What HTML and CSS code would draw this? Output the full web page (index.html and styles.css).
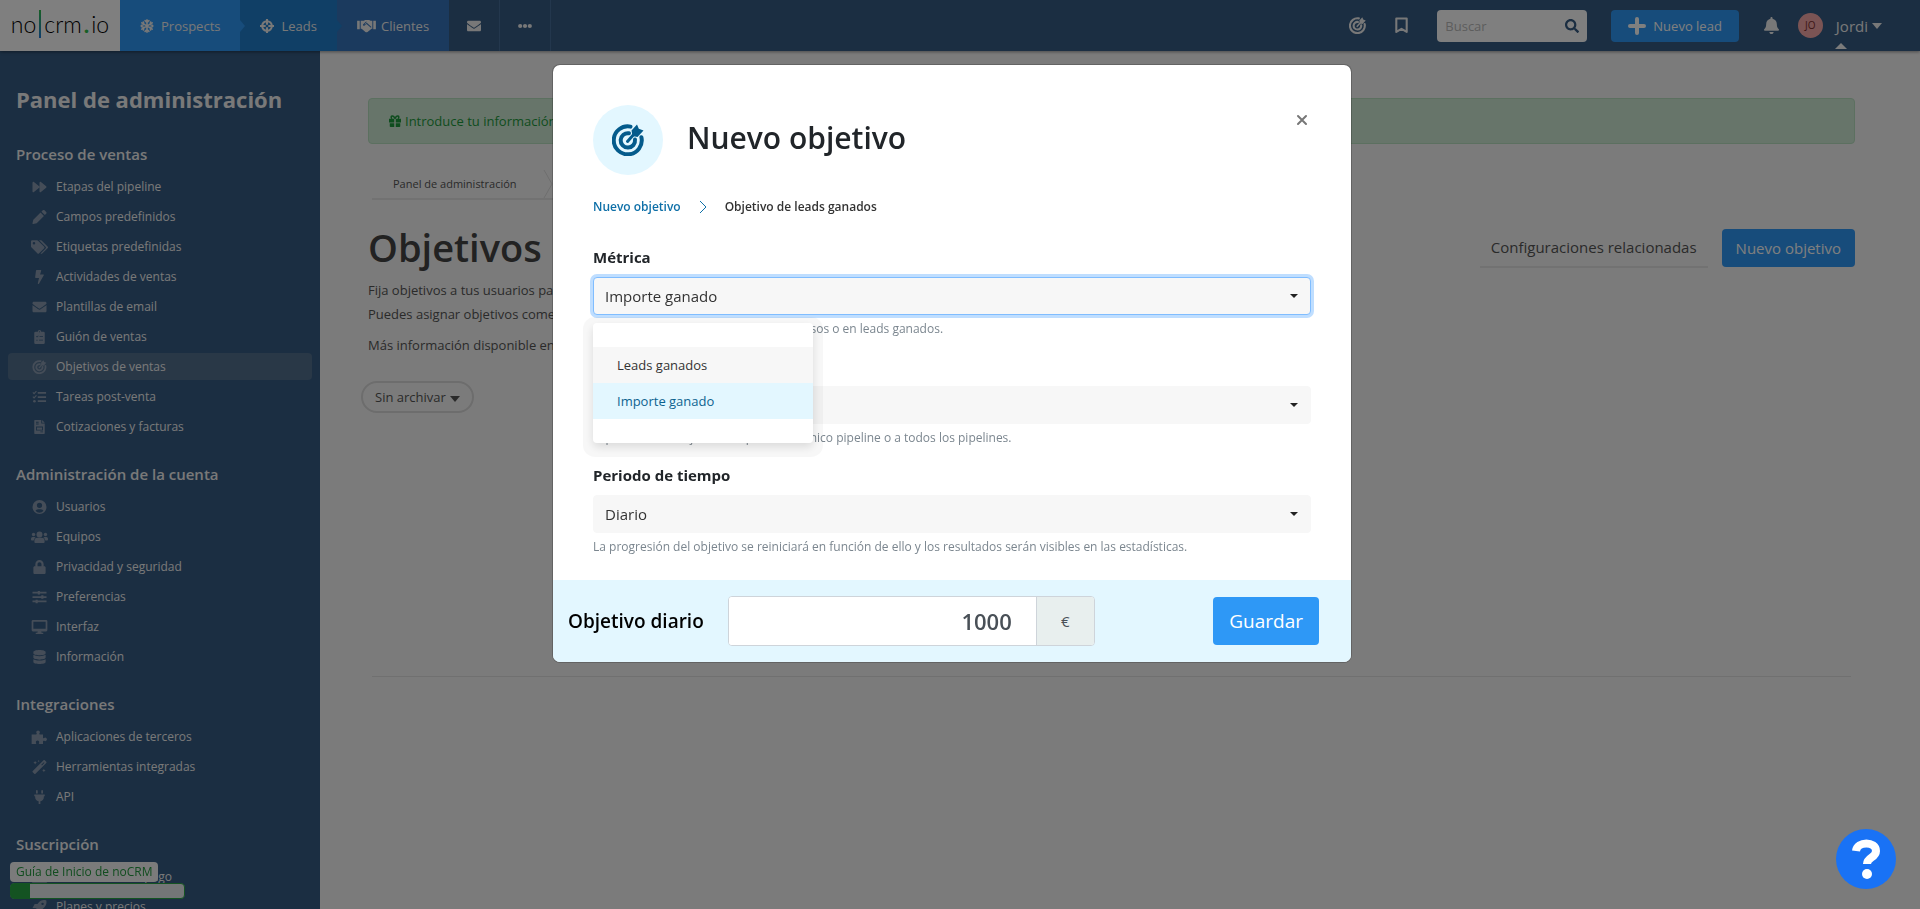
FILE: index.html
```html
<!doctype html>
<html lang="es">
  <head>
    <meta charset="UTF-8" />
    <meta name="viewport" content="width=device-width, initial-scale=1.0" />
    <title>Objetivos de ventas - noCRM.io</title>
    <link rel="stylesheet" href="styles.css">
  </head>
  <body>
    <!-- Icon sprite -->
    <svg class="sprite" aria-hidden="true">
      <symbol id="i-target" viewBox="0 0 32 32">
        <g fill="none" stroke="currentColor" stroke-linecap="round">
          <path stroke-width="4" d="M18.5 2.6A14 14 0 1 0 29.4 13.2" />
          <path stroke-width="4" d="M17 9.3A7.2 7.2 0 1 0 23 15.5" />
          <path stroke-width="3" d="M15.5 17.5L23 9" />
        </g>
        <path fill="currentColor" d="M19.5 6.5L25 .5l1.8 4.2L31.500 6.500l-6 6.500-5-1z" />
      </symbol>
      <symbol id="i-forward" viewBox="0 0 512 512">
        <path d="M500.500 231.400l-192-160C287.900 54.300 256 68.600 256 96v320c0 27.400 31.900 41.800 52.500 24.600l192-160c15.300-12.800 15.300-36.400 0-49.200zm-256 0l-192-160C31.900 54.300 0 68.600 0 96v320c0 27.400 31.900 41.800 52.500 24.600l192-160c15.300-12.800 15.300-36.400 0-49.200z" />
      </symbol>
      <symbol id="i-pencil" viewBox="0 0 16 16">
        <path d="M9.200 2.900l3.900 3.900-8.300 8.300L.8 16a.7.7 0 0 1-.8-.8l.9-4zM10.200 1.900l1.500-1.500a1.500 1.500 0 0 1 2.100 0l1.800 1.800a1.500 1.500 0 0 1 0 2.100l-1.500 1.500z" />
      </symbol>
      <symbol id="i-tags" viewBox="0 0 20 16">
        <path fill-rule="evenodd" d="M0 1.500V7.300c0 .4.200.8.400 1.100l7 7a1.500 1.500 0 0 0 2.200 0l5.700-5.700a1.500 1.500 0 0 0 0-2.200l-7-7A1.500 1.500 0 0 0 7.200 0H1.500A1.500 1.500 0 0 0 0 1.500zM3.500 2a1.500 1.500 0 1 1 0 3 1.500 1.500 0 0 1 0-3zM9.500 0l7.600 7.600a1.500 1.500 0 0 1 0 2.100l-5.900 5.900a1.500 1.500 0 0 0 2 0l6.300-6a1.500 1.500 0 0 0 0-2.200l-7-7A1.500 1.500 0 0 0 11.200 0z" />
      </symbol>
      <symbol id="i-bolt" viewBox="0 0 320 512">
        <path d="M296 160H180.600l42.600-129.800C227.200 15 215.700 0 200 0H56C44 0 33.800 8.900 32.200 20.800l-32 240C-1.700 275.200 9.500 288 24 288h118.700L96.600 482.500c-3.600 15.200 8 29.500 23.300 29.500 8.400 0 16.400-4.400 20.800-12l176-304c9.300-15.900-2.200-36-20.700-36z" />
      </symbol>
      <symbol id="i-envelope" viewBox="0 0 512 512">
        <path d="M502.300 190.800c3.900-3.100 9.700-.2 9.700 4.700V400c0 26.500-21.500 48-48 48H48c-26.500 0-48-21.500-48-48V195.600c0-5 5.700-7.800 9.700-4.700 22.400 17.400 52.100 39.500 154.100 113.600 21.100 15.400 56.700 47.800 92.200 47.600 35.700.3 72-32.800 92.300-47.600 102-74.100 131.600-96.300 154-113.700zM256 320c23.200.4 56.600-29.200 73.400-41.400 132.700-96.300 142.800-104.700 173.400-128.700 5.800-4.500 9.200-11.500 9.200-18.900v-19c0-26.500-21.500-48-48-48H48c-26.500 0-48 21.500-48 48v19c0 7.400 3.400 14.300 9.200 18.900 30.600 23.900 40.700 32.400 173.400 128.700 16.800 12.200 50.200 41.800 73.400 41.400z" />
      </symbol>
      <symbol id="i-clipboard" viewBox="0 0 12 16">
        <path fill-rule="evenodd" d="M1.500 2H4a2 2 0 0 1 4 0h2.500A1.500 1.500 0 0 1 12 3.500v11a1.500 1.500 0 0 1-1.500 1.500h-9A1.500 1.500 0 0 1 0 14.500v-11A1.500 1.500 0 0 1 1.500 2zM6 1.300a.7.7 0 1 0 0 1.400.7.7 0 0 0 0-1.400zM2 7.500l1.200 1.200L5 6.800l-.6-.6-1.200 1.300-.6-.6zM6 7h4v1H6zM2.500 11h1.200v1.200H2.500zM5.500 11H10v1H5.500z" />
      </symbol>
      <symbol id="i-tasks" viewBox="0 0 16 16">
        <path d="M6 2.200h9.500v2H6zM6 7h9.500v2H6zM6 11.800h9.500v2H6z" />
        <circle cx="2.200" cy="12.800" r="1.500" />
        <path fill="none" stroke="currentColor" stroke-width="1.300" d="M.4 2.800l1.400 1.400L4.500 1.400M.4 7.600L1.800 9l2.700-2.800" />
      </symbol>
      <symbol id="i-invoice" viewBox="0 0 12 16">
        <path fill-rule="evenodd" d="M.8 0H8v4h4v11.200a.8.8 0 0 1-.8.8H.8a.8.8 0 0 1-.8-.8V.8A.8.800 0 0 1 .8 0zM9 0l3 3H9zM2 2v1h3V2zM2 4v1h3V4zM2 7.500v4.500h8V7.500zM3 8.500h6V11H3zM7 13v1h3v-1z" />
      </symbol>
      <symbol id="i-user" viewBox="0 0 16 16">
        <path fill-rule="evenodd" d="M8 0a8 8 0 1 1 0 16A8 8 0 0 1 8 0zm0 3a3 3 0 1 0 0 6 3 3 0 0 0 0-6zM3.400 12.400a6 6 0 0 0 9.200 0A3.500 3.500 0 0 0 9.600 10.500H6.400a3.500 3.500 0 0 0-3 1.900z" />
      </symbol>
      <symbol id="i-users" viewBox="0 0 20 16">
        <circle cx="10" cy="5" r="3.500" /><circle cx="3" cy="5" r="2" /><circle cx="17" cy="5" r="2" />
        <path d="M4 14v-1.500A3.500 3.500 0 0 1 7.500 9h5a3.500 3.500 0 0 1 3.500 3.500V14a1 1 0 0 1-1 1H5a1 1 0 0 1-1-1zM0 11V10a2 2 0 0 1 2-2h2a2 2 0 0 1 1.400.6A4.500 4.500 0 0 0 3.200 12H1a1 1 0 0 1-1-1zM20 11V10a2 2 0 0 0-2-2h-2a2 2 0 0 0-1.400.6A4.500 4.500 0 0 1 16.800 12H19a1 1 0 0 0 1-1z" />
      </symbol>
      <symbol id="i-lock" viewBox="0 0 448 512">
        <path d="M400 224h-24v-72C376 68.200 307.800 0 224 0S72 68.200 72 152v72H48c-26.500 0-48 21.500-48 48v192c0 26.500 21.500 48 48 48h352c26.500 0 48-21.500 48-48V272c0-26.500-21.500-48-48-48zm-104 0H152v-72c0-39.700 32.300-72 72-72s72 32.300 72 72v72z" />
      </symbol>
      <symbol id="i-sliders" viewBox="0 0 16 16">
        <path d="M0 2h6V1h2.500v1H16v2H8.500v1H6V4H0zM0 7h10V6h2.500v1H16v2h-3.500v1H10V9H0zM0 12h3.500v-1H6v1h10v2H6v1H3.500v-1H0z" />
      </symbol>
      <symbol id="i-desktop" viewBox="0 0 18 16">
        <path fill-rule="evenodd" d="M1.500 0h15A1.500 1.500 0 0 1 18 1.500v10a1.500 1.500 0 0 1-1.500 1.500H11l.5 1.500h1.800V16H4.700v-1.500h1.800L7 13H1.500A1.500 1.500 0 0 1 0 11.500v-10A1.500 1.500 0 0 1 1.500 0zM2 2v8h14V2z" />
      </symbol>
      <symbol id="i-database" viewBox="0 0 14 16">
        <path d="M14 2.300v1.400C14 5 10.900 6 7 6S0 5 0 3.700V2.300C0 1 3.100 0 7 0s7 1 7 2.300zM14 5.500v3.200C14 10 10.900 11 7 11S0 10 0 8.700V5.500C1.500 6.500 4.300 7 7 7s5.500-.5 7-1.500zM14 10.500v3.200C14 15 10.900 16 7 16s-7-1-7-2.300v-3.200C1.500 11.500 4.300 12 7 12s5.500-.5 7-1.500z" />
      </symbol>
      <symbol id="i-puzzle" viewBox="0 0 18 16">
        <path d="M0 5h5.200c.8 0 .9-.6.5-1.300A2 2 0 1 1 9 3.700c-.5.700-.3 1.300.5 1.300H13v3.500c0 .8.600 1 1.300.6a2 2 0 1 1 0 3.300c-.7-.5-1.300-.2-1.300.6v3H9c-.8 0-1-.5-.6-1.200a1.900 1.900 0 1 0-3.300 0c.4.700.2 1.200-.6 1.200H0z" />
      </symbol>
      <symbol id="i-wand" viewBox="0 0 16 16">
        <path fill-rule="evenodd" d="M12.600.3a1 1 0 0 1 1.400 0L15.700 2a1 1 0 0 1 0 1.400L3.400 15.700a1 1 0 0 1-1.400 0L.3 14a1 1 0 0 1 0-1.400zM13 2.500L10 5.400 10.800 6.200l2.900-3zM3 1l.7 1.300L5 3l-1.300.7L3 5l-.7-1.300L1 3l1.300-.7zM7 0l.4.800.8.400-.8.400L7 2.400l-.4-.8-.8-.4.800-.4zM13 10l.7 1.300L15 12l-1.300.7L13 14l-.7-1.300L11 12l1.300-.7z" />
      </symbol>
      <symbol id="i-plug" viewBox="0 0 12 16">
        <path d="M2 1a1 1 0 0 1 2 0v3H2zM8 1a1 1 0 0 1 2 0v3H8zM0 5h12v2h-1v1a5 5 0 0 1-4 4.900V16H5v-3.100A5 5 0 0 1 1 8V7H0z" />
      </symbol>
      <symbol id="i-card" viewBox="0 0 18 16">
        <path d="M0 5.500V3.500A1.500 1.500 0 0 1 1.500 2h15A1.500 1.500 0 0 1 18 3.500v2zM0 7h18v6a1.500 1.500 0 0 1-1.500 1.500h-15A1.500 1.500 0 0 1 0 13z" />
      </symbol>
      <symbol id="i-rocket" viewBox="0 0 16 16">
        <path fill-rule="evenodd" d="M15.800.5c.6 3.500 0 6.300-4.300 9.800v3.200L7 16l-.5-4L4 9.500 0 9l2.500-4.500h3.200C9.200.2 12 -.4 15.800.5zM11.500 3a1.400 1.400 0 1 0 0 2.800 1.400 1.400 0 0 0 0-2.800z" />
      </symbol>
      <symbol id="i-snow" viewBox="0 0 16 16">
        <path fill="none" stroke="currentColor" stroke-width="1.800" stroke-linecap="round" d="M8 1v14M2 4.500l12 7M2 11.500l12-7M5.800 1.800L8 3.800l2.200-2M5.800 14.200l2.200-2 2.200 2M1.500 7.300l2.900-1L3.800 3.400M14.500 8.700l-2.900 1 .6 2.900M14.500 7.300l-2.900-1 .6-2.900M1.500 8.700l2.900 1-.6 2.900" />
      </symbol>
      <symbol id="i-crosshair" viewBox="0 0 16 16">
        <circle cx="8" cy="8" r="5.500" fill="none" stroke="currentColor" stroke-width="2.400" />
        <path fill="none" stroke="currentColor" stroke-width="2.400" d="M8 0v6.500M8 9.500V16M0 8h6.500M9.500 8H16" />
      </symbol>
      <symbol id="i-handshake" viewBox="0 0 20 16">
        <path fill-rule="evenodd" d="M0 3h2.800v9H0zM17.200 3H20v9h-2.800zM3.800 3h3.400L8.500 2h4.300l1.600 1h1.800v8.500h-.8l-4.300 3.300a2 2 0 0 1-2.300 0L4.800 11.500h-1zM9.300 4L6.500 6.600a1 1 0 0 0 1.500 1.400l2-1.700 4.700 4 .6-.8L10.900 5.500 10.300 5 8.500 6.800l-.7-.2L10.500 4z" />
      </symbol>
      <symbol id="i-bookmark" viewBox="0 0 14 18">
        <path fill="none" stroke="currentColor" stroke-width="2.200" stroke-linejoin="round" d="M1.500 1.500h11v14.300L7 12.500l-5.500 3.300z" />
      </symbol>
      <symbol id="i-search" viewBox="0 0 512 512">
        <path d="M505 442.700L405.300 343c-4.500-4.500-10.600-7-17-7H372c27.600-35.300 44-79.700 44-128C416 93.100 322.900 0 208 0S0 93.100 0 208s93.100 208 208 208c48.300 0 92.700-16.400 128-44v16.300c0 6.400 2.500 12.500 7 17l99.700 99.700c9.400 9.400 24.600 9.400 33.900 0l28.300-28.300c9.400-9.400 9.400-24.600.1-34zM208 336c-70.700 0-128-57.200-128-128 0-70.700 57.200-128 128-128 70.700 0 128 57.200 128 128 0 70.700-57.200 128-128 128z" />
      </symbol>
      <symbol id="i-bell" viewBox="0 0 448 512">
        <path d="M224 512c35.320 0 63.970-28.650 63.970-64H160.030c0 35.350 28.650 64 63.970 64zm215.390-149.710c-19.320-20.760-55.470-51.990-55.470-154.290 0-77.700-54.480-139.900-127.940-155.160V32c0-17.670-14.320-32-31.980-32s-31.980 14.330-31.980 32v20.840C118.560 68.100 64.080 130.300 64.080 208c0 102.300-36.150 133.530-55.470 154.290-6 6.450-8.660 14.160-8.610 21.710.11 16.400 12.980 32 32.100 32h383.800c19.120 0 32-15.600 32.100-32 .05-7.550-2.610-15.270-8.610-21.710z" />
      </symbol>
      <symbol id="i-plus" viewBox="0 0 18 18">
        <path fill="none" stroke="currentColor" stroke-width="4" stroke-linecap="round" d="M9 2v14M2 9h14" />
      </symbol>
      <symbol id="i-dots" viewBox="0 0 16 16">
        <circle cx="2.500" cy="8" r="2.400" /><circle cx="8" cy="8" r="2.400" /><circle cx="13.500" cy="8" r="2.400" />
      </symbol>
      <symbol id="i-gift" viewBox="0 0 16 16">
        <path d="M0 5h7v5H0zM9 5h7v5H9zM1 11h6v5H2a1 1 0 0 1-1-1zM9 11h6v4a1 1 0 0 1-1 1H9z" />
        <path fill="none" stroke="currentColor" stroke-width="2" d="M8 5C7 2 5.500 1 4 1.200S2.500 4 4 5M8 5c1-3 2.500-4 4-3.800S13.500 4 12 5" />
      </symbol>
    </svg>

    <header class="navbar">
      <a class="logo" href="#" aria-label="noCRM.io">no<span class="logo-bar"></span>crm<span class="logo-dot">.</span>io</a>
      <nav class="nav-main">
        <a class="nav-link prospects" href="#"><svg class="icon"><use href="#i-snow" /></svg>Prospects</a>
        <a class="nav-link leads" href="#"><svg class="icon"><use href="#i-crosshair" /></svg>Leads</a>
        <a class="nav-link clients" href="#"><svg class="icon wide"><use href="#i-handshake" /></svg>Clientes</a>
        <a class="nav-link mail" href="#" aria-label="Email"><svg class="icon"><use href="#i-envelope" /></svg></a>
        <a class="nav-link more" href="#" aria-label="Más"><svg class="icon"><use href="#i-dots" /></svg></a>
      </nav>
      <div class="nav-tools">
        <a class="tool" href="#" aria-label="Objetivos"><svg><use href="#i-target" /></svg></a>
        <a class="tool" href="#" aria-label="Guardados"><svg><use href="#i-bookmark" /></svg></a>
        <form class="search">
          <input type="text" placeholder="Buscar" aria-label="Buscar" />
          <button type="button" aria-label="Buscar"><svg><use href="#i-search" /></svg></button>
        </form>
        <button class="btn new-lead" type="button"><svg><use href="#i-plus" /></svg>Nuevo lead</button>
        <a class="tool bell" href="#" aria-label="Notificaciones"><svg><use href="#i-bell" /></svg></a>
        <a class="account" href="#"><span class="avatar">JO</span>Jordi<span class="caret"></span></a>
      </div>
    </header>

    <div class="layout">
      <aside class="sidebar">
        <h2>Panel de administración</h2>
        <section>
          <h3>Proceso de ventas</h3>
          <ul>
            <li><a href="#"><svg><use href="#i-forward" /></svg>Etapas del pipeline</a></li>
            <li><a href="#"><svg><use href="#i-pencil" /></svg>Campos predefinidos</a></li>
            <li><a href="#"><svg><use href="#i-tags" /></svg>Etiquetas predefinidas</a></li>
            <li><a href="#"><svg><use href="#i-bolt" /></svg>Actividades de ventas</a></li>
            <li><a href="#"><svg><use href="#i-envelope" /></svg>Plantillas de email</a></li>
            <li><a href="#"><svg><use href="#i-clipboard" /></svg>Guión de ventas</a></li>
            <li><a class="active" href="#"><svg><use href="#i-target" /></svg>Objetivos de ventas</a></li>
            <li><a href="#"><svg><use href="#i-tasks" /></svg>Tareas post-venta</a></li>
            <li><a href="#"><svg><use href="#i-invoice" /></svg>Cotizaciones y facturas</a></li>
          </ul>
        </section>
        <section>
          <h3>Administración de la cuenta</h3>
          <ul>
            <li><a href="#"><svg><use href="#i-user" /></svg>Usuarios</a></li>
            <li><a href="#"><svg><use href="#i-users" /></svg>Equipos</a></li>
            <li><a href="#"><svg><use href="#i-lock" /></svg>Privacidad y seguridad</a></li>
            <li><a href="#"><svg><use href="#i-sliders" /></svg>Preferencias</a></li>
            <li><a href="#"><svg><use href="#i-desktop" /></svg>Interfaz</a></li>
            <li><a href="#"><svg><use href="#i-database" /></svg>Información</a></li>
          </ul>
        </section>
        <section>
          <h3>Integraciones</h3>
          <ul>
            <li><a href="#"><svg><use href="#i-puzzle" /></svg>Aplicaciones de terceros</a></li>
            <li><a href="#"><svg><use href="#i-wand" /></svg>Herramientas integradas</a></li>
            <li><a href="#"><svg><use href="#i-plug" /></svg>API</a></li>
          </ul>
        </section>
        <section>
          <h3>Suscripción</h3>
          <ul>
            <li><a href="#"><svg><use href="#i-card" /></svg>Información de pago</a></li>
            <li><a href="#"><svg><use href="#i-rocket" /></svg>Planes y precios</a></li>
          </ul>
        </section>
      </aside>

      <main class="content">
        <div class="alert"><svg><use href="#i-gift" /></svg><a href="#">Introduce tu información</a></div>
        <nav class="breadcrumb">
          <a href="#">Panel de administración</a>
          <svg viewBox="0 0 10 28"><path d="M1 0l8 14-8 14" /></svg>
          <span>Objetivos</span>
        </nav>
        <div class="page-head">
          <h1>Objetivos de ventas</h1>
          <div class="page-actions">
            <a class="related" href="#">Configuraciones relacionadas</a>
            <button class="btn" type="button">Nuevo objetivo</button>
          </div>
        </div>
        <p class="intro">Fija objetivos a tus usuarios para motivarlos.<br />Puedes asignar objetivos comerciales.</p>
        <p class="intro">Más información disponible en la ayuda.</p>
        <button class="filter" type="button">Sin archivar<span class="caret"></span></button>
        <hr />
      </main>
    </div>

    <div class="guide">
      <a href="#">Guía de Inicio de noCRM</a>
      <div class="guide-progress"><div class="guide-bar"></div></div>
    </div>

    <div class="backdrop">
      <div class="modal" role="dialog" aria-labelledby="modalTitle">
        <div class="modal-body">
          <div class="modal-head">
            <div class="modal-icon"><svg><use href="#i-target" /></svg></div>
            <h2 id="modalTitle">Nuevo objetivo</h2>
            <button class="close" type="button" aria-label="Cerrar">
              <svg viewBox="0 0 12 12"><path d="M2 2l8 8M10 2l-8 8" /></svg>
            </button>
          </div>
          <nav class="steps">
            <a href="#">Nuevo objetivo</a>
            <svg viewBox="0 0 8 14"><path d="M1 1l6 6-6 6" /></svg>
            <span>Objetivo de leads ganados</span>
          </nav>

          <div class="field">
            <label for="metric">Métrica</label>
            <div class="select open">
              <select id="metric">
                <option>Leads ganados</option>
                <option selected>Importe ganado</option>
              </select>
              <ul class="menu">
                <li class="hover">Leads ganados</li>
                <li class="selected">Importe ganado</li>
              </ul>
            </div>
            <p class="help">El objetivo se puede medir en tus ingresos o en leads ganados.</p>
          </div>
          <div class="field">
            <label for="pipeline">Pipeline</label>
            <div class="select">
              <select id="pipeline">
                <option>Todos los pipelines</option>
              </select>
            </div>
            <p class="help">Especifica si el objetivo se aplica a un único pipeline o a todos los pipelines.</p>
          </div>
          <div class="field">
            <label for="period">Periodo de tiempo</label>
            <div class="select">
              <select id="period">
                <option>Diario</option>
              </select>
            </div>
            <p class="help">La progresión del objetivo se reiniciará en función de ello y los resultados serán visibles en las estadísticas.</p>
          </div>
        </div>
        <div class="modal-footer">
          <label for="amount">Objetivo diario</label>
          <div class="amount">
            <input id="amount" type="text" value="1000" />
            <span>€</span>
          </div>
          <button class="btn save" type="button">Guardar</button>
        </div>
      </div>
    </div>

    <button class="help-btn" type="button" aria-label="Ayuda">
      <svg viewBox="0 0 32 40"><path d="M6 12C7 2 26 2 26 12c0 7-9 6-9 13" /><circle cx="17" cy="35" r="5" /></svg>
    </button>
  </body>
</html>
```
FILE: styles.css
```css
* {
  box-sizing: border-box;
}

body {
  margin: 0;
  height: 100vh;
  overflow: hidden;
  display: flex;
  flex-direction: column;
  font-family: "Segoe UI", "Open Sans", "Noto Sans", sans-serif;
  font-size: 13px;
  line-height: 24px;
  color: #555;
  background: #f7f7f7;
}

h1,
h2,
h3,
p,
ul {
  margin: 0;
  padding: 0;
}

ul {
  list-style: none;
}

a {
  color: inherit;
  text-decoration: none;
}

button,
input,
select {
  font: inherit;
  color: inherit;
}

button {
  cursor: pointer;
}

svg {
  display: block;
  flex: none;
  fill: currentColor;
}

.sprite {
  position: absolute;
  width: 0;
  height: 0;
}

.caret {
  display: inline-block;
  margin-left: 4px;
  border: 5px solid transparent;
  border-top: 6px solid currentColor;
  border-bottom: 0;
}

.btn {
  border: 0;
  border-radius: 4px;
  background: #2e98f6;
  color: #fff;
}

/* Navbar */
.navbar {
  display: flex;
  flex: none;
  height: 51px;
  background: #365c84;
  color: #f0f0f0;
  box-shadow: 0 1px 3px rgba(0, 0, 0, 0.4);
  z-index: 1;
}

.logo {
  display: flex;
  align-items: center;
  justify-content: center;
  width: 120px;
  padding-bottom: 4px;
  background: #fff;
  color: #000;
  font-family: Lato, sans-serif;
  font-size: 23px;
  font-weight: 300;
}

.logo-bar {
  width: 2px;
  height: 28px;
  margin: 0 3px;
  background: linear-gradient(#2fbf4a, #1f7ad8);
}

.logo-dot {
  margin: 0 2px;
  color: #2fbf4a;
  font-weight: 700;
}

.nav-main {
  display: flex;
}

.nav-link {
  display: flex;
  align-items: center;
  gap: 7px;
  padding: 0 20px;
}

.nav-link .icon {
  width: 14px;
  height: 14px;
}

.nav-link .wide {
  width: 19px;
  height: 15px;
}

.prospects,
.leads {
  position: relative;
}

.prospects {
  background: #2e98f6;
}

.leads {
  background: #207ecc;
}

.prospects::after,
.leads::after {
  content: "";
  position: absolute;
  left: 100%;
  top: 20px;
  z-index: 1;
  border: 6px solid transparent;
  border-left: 5px solid #2e98f6;
  border-right: 0;
}

.leads::after {
  border-left-color: #207ecc;
}

.clients {
  gap: 5px;
  background: #3674bc;
}

.mail,
.more {
  padding: 0 18px;
  border-right: 1px solid #476f9a;
}

.nav-tools {
  display: flex;
  align-items: center;
  margin-left: auto;
  padding-right: 38px;
}

.tool {
  margin-right: 27px;
}

.tool svg {
  width: 17px;
  height: 17px;
}

.search {
  display: flex;
  width: 150px;
  height: 32px;
  border-radius: 4px;
  background: #fff;
}

.search input {
  flex: 1;
  min-width: 0;
  padding: 0 8px;
  border: 0;
  background: none;
}

.search input::placeholder {
  color: #bbb;
}

.search button {
  padding: 0 8px;
  border: 0;
  background: none;
  color: #365c84;
}

.search svg {
  width: 14px;
  height: 14px;
}

.new-lead {
  display: flex;
  align-items: center;
  gap: 7px;
  height: 32px;
  margin: 0 24px;
  padding: 0 17px;
}

.new-lead svg {
  width: 18px;
  height: 18px;
}

.bell {
  margin-right: 18px;
}

.account {
  position: relative;
  display: flex;
  align-items: center;
  font-size: 15px;
}

.account::after {
  content: "";
  position: absolute;
  left: 37px;
  top: 30px;
  border: 6px solid transparent;
  border-bottom-color: #f7f7f7;
  border-top: 0;
}

.avatar {
  width: 25px;
  height: 25px;
  margin-right: 13px;
  border-radius: 50%;
  background: #f7a9a9;
  color: #7b2c2c;
  font-size: 10px;
  line-height: 25px;
  text-align: center;
}

/* Layout */
.layout {
  display: flex;
  flex: 1;
  min-height: 0;
}

.sidebar {
  flex: none;
  width: 320px;
  padding: 31px 8px 0;
  overflow: hidden;
  background: #365c84;
  color: #f2f2f2;
}

.sidebar h2 {
  padding: 0 8px;
  margin-bottom: 20px;
  font-size: 22px;
  line-height: 34px;
  font-weight: 700;
}

.sidebar h3 {
  padding: 0 8px;
  font-size: 15px;
  line-height: 36px;
  font-weight: 600;
}

.sidebar section {
  margin-bottom: 14px;
}

.sidebar li {
  padding: 1px 0 2px;
}

.sidebar li a {
  display: flex;
  align-items: center;
  gap: 8px;
  height: 27px;
  padding-left: 23px;
  border-radius: 4px;
  font-size: 12px;
}

.sidebar li svg {
  width: 17px;
  height: 14px;
  color: #8a9bb0;
}

.sidebar li .active {
  background: #52708f;
}

.content {
  flex: 1;
  min-width: 0;
  padding: 47px 65px 0 48px;
}

.alert {
  display: flex;
  align-items: center;
  gap: 4px;
  height: 46px;
  padding: 0 20px;
  border: 1px solid #b8e0c0;
  border-radius: 4px;
  background: #cfead5;
  color: #1d9a3c;
}

.alert svg {
  width: 12px;
  height: 12px;
}

.breadcrumb {
  display: flex;
  align-items: center;
  gap: 26px;
  width: fit-content;
  height: 32px;
  margin: 24px 4px 0;
  padding: 1px 21px 0;
  border-bottom: 2px solid #e4e4e4;
  font-size: 11px;
}

.breadcrumb svg {
  width: 10px;
  height: 28px;
  fill: none;
  stroke: #dcdcdc;
}

.page-head {
  display: flex;
  align-items: center;
  justify-content: space-between;
  margin: 22px 0 4px;
}

.page-head h1 {
  padding-bottom: 2px;
  font-size: 38px;
  line-height: 50px;
  font-weight: 600;
  color: #444;
}

.page-actions {
  display: flex;
  align-items: center;
  gap: 14px;
  font-size: 15px;
}

.page-actions .btn {
  height: 38px;
  padding: 0 14px;
}

.related {
  padding: 7px 11px;
  border-bottom: 2px solid #e4e4e4;
}

.intro {
  margin-bottom: 7px;
}

.filter {
  height: 32px;
  margin: 17px 0 0 -7px;
  padding: 0 12px;
  border: 2px solid #dadada;
  border-radius: 16px;
  background: none;
}

.content hr {
  margin: 263px 4px 0;
  border: 0;
  border-top: 1px solid #e0e0e0;
}

/* Getting started widget */
.guide {
  position: fixed;
  left: 10px;
  bottom: 10px;
  width: 175px;
}

.guide a {
  display: inline-block;
  padding: 0 6px;
  border-radius: 4px;
  background: #f7f7f7;
  color: #239a3f;
  font-size: 12px;
  line-height: 20px;
}

.guide-progress {
  height: 16px;
  border: 1px solid #28a745;
  border-radius: 4px;
  background: #e9ecef;
}

.guide-bar {
  width: 11%;
  height: 100%;
  background: #28a745;
}

/* Modal */
.backdrop {
  position: fixed;
  inset: 0;
  z-index: 10;
  padding: 64px 16px 0 0;
  background: rgba(0, 0, 0, 0.5);
}

.modal {
  max-width: 800px;
  margin: 0 auto;
  border: 1px solid rgba(0, 0, 0, 0.2);
  border-radius: 8px;
  background: #fff;
  background-clip: padding-box;
  color: #333;
}

.modal-body {
  padding: 40px 40px 8px;
}

.modal-head {
  display: flex;
  align-items: center;
  gap: 24px;
}

.modal-icon {
  display: flex;
  align-items: center;
  justify-content: center;
  width: 70px;
  height: 70px;
  border-radius: 50%;
  background: #e3f7ff;
  color: #045b8c;
}

.modal-icon svg {
  width: 32px;
  height: 32px;
}

.modal-head h2 {
  flex: 1;
  padding-bottom: 4px;
  font-size: 30px;
  line-height: 36px;
  font-weight: 600;
  color: #212529;
}

.close {
  align-self: flex-start;
  padding: 9px 3px;
  border: 0;
  background: none;
}

.close svg {
  width: 12px;
  height: 12px;
  fill: none;
  stroke: #777;
  stroke-width: 2;
  stroke-linecap: round;
}

.steps {
  display: flex;
  align-items: center;
  margin: 20px 0 26px;
  gap: 18px;
  font-size: 12px;
  font-weight: 600;
}

.steps a,
.steps svg {
  color: #0f70a8;
}

.steps svg {
  width: 8px;
  height: 14px;
  fill: none;
  stroke: currentColor;
}

.field {
  margin-bottom: 10px;
}

.field label {
  display: block;
  margin-bottom: 8px;
  font-size: 15px;
  font-weight: 700;
  color: #212529;
}

.select {
  position: relative;
}

.select::after {
  content: "";
  position: absolute;
  right: 13px;
  top: 17px;
  border: 4px solid transparent;
  border-top-color: #222;
  border-bottom: 0;
}

.select select {
  display: block;
  width: 100%;
  height: 38px;
  padding: 0 11px;
  border: 1px solid #f7f7f7;
  border-radius: 4px;
  background: #f7f7f7;
  font-size: 15px;
  appearance: none;
}

.select.open select {
  border-color: #80bdff;
  box-shadow: 0 0 0 3px #bfdeff;
}

.menu {
  position: absolute;
  left: 0;
  top: 46px;
  z-index: 2;
  width: 220px;
  padding: 24px 0;
  border-radius: 4px;
  background: #fff;
  box-shadow: 0 4px 10px rgba(0, 0, 0, 0.12), 0 4px 0 10px rgba(0, 0, 0, 0.03);
}

.menu li {
  padding: 6px 24px;
}

.menu .hover {
  background: #f7f7f7;
}

.menu .selected {
  background: #e3f7ff;
  color: #0d6390;
}

.help {
  padding-top: 2px;
  padding-bottom: 3px;
  font-size: 12px;
  color: #7b868f;
}

.modal-footer {
  display: flex;
  align-items: center;
  padding: 16px 32px 16px 15px;
  border-radius: 0 0 7px 7px;
  background: #e3f7ff;
}

.modal-footer label {
  margin-right: 24px;
  font-size: 19px;
  font-weight: 600;
  color: #000;
}

.amount {
  display: flex;
  flex: 0 1 367px;
  min-width: 0;
  height: 50px;
  border: 1px solid #ced4da;
  border-radius: 4px;
  background: #fff;
  overflow: hidden;
}

.amount input {
  flex: 1;
  min-width: 0;
  padding: 0 24px;
  border: 0;
  font-size: 22px;
  font-weight: 600;
  text-align: right;
  color: #495057;
}

.amount span {
  width: 58px;
  border-left: 1px solid #ced4da;
  background: #e8efee;
  font-size: 15px;
  line-height: 48px;
  text-align: center;
  color: #495057;
}

.save {
  height: 48px;
  margin-left: auto;
  padding: 0 16px;
  font-size: 19px;
}

.help-btn {
  position: fixed;
  right: 24px;
  bottom: 20px;
  z-index: 11;
  display: flex;
  align-items: center;
  justify-content: center;
  width: 60px;
  height: 60px;
  padding: 0;
  border: 0;
  border-radius: 50%;
  background: #1972f5;
  color: #fff;
}

.help-btn svg {
  width: 32px;
  height: 40px;
}

.help-btn path {
  fill: none;
  stroke: currentColor;
  stroke-width: 8;
}
```
